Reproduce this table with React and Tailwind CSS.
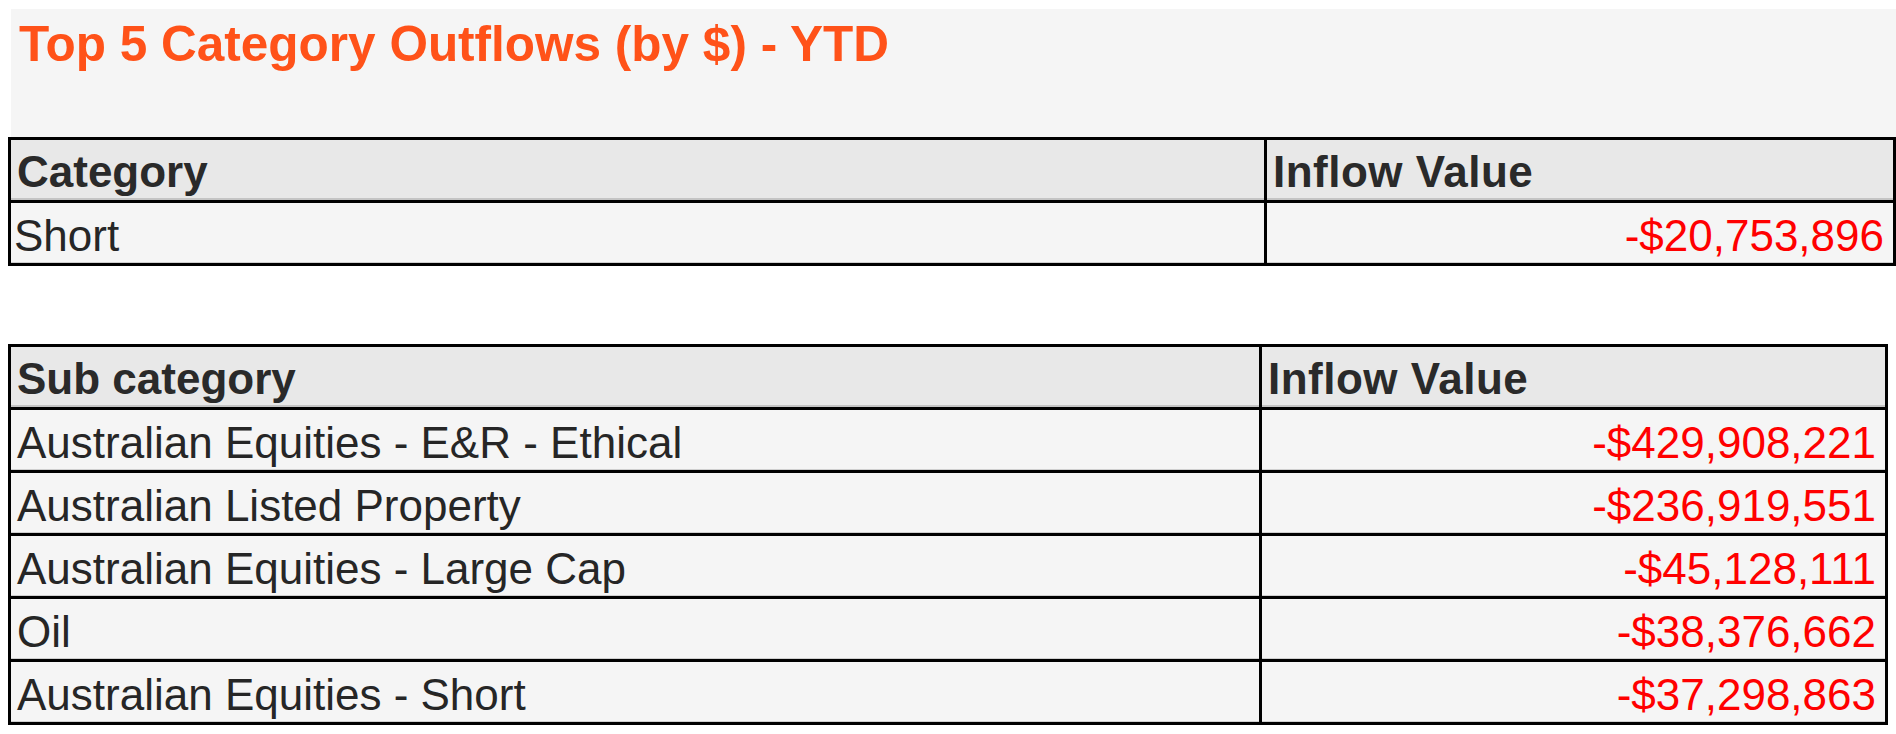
import React from 'react';

const categoryRows = [{ name: 'Short', value: '-$20,753,896' }];

const subCategoryRows = [
    { name: 'Australian Equities - E&R - Ethical', value: '-$429,908,221' },
    { name: 'Australian Listed Property', value: '-$236,919,551' },
    { name: 'Australian Equities - Large Cap', value: '-$45,128,111' },
    { name: 'Oil', value: '-$38,376,662' },
    { name: 'Australian Equities - Short', value: '-$37,298,863' },
];

const FlowTable = ({ label, rows, width, firstCol, namePad }) => {
    return (
        <div className={`${width} border-[3px] border-black`}>
            {/* Header */}
            <div className="flex h-[60px] bg-[#e8e8e8] shadow-[inset_0_-2px_0_#c4c4c4]">
                <div className={`${firstCol} shrink-0 border-r-[3px] border-black flex items-end pl-[6px] pb-[2px]`}>
                    <span className="text-[44px] leading-[1.15] font-bold text-[#2a2a2a]">{label}</span>
                </div>
                <div className="flex-1 flex items-end pl-[6px] pb-[2px]">
                    <span className="text-[44px] leading-[1.15] font-bold text-[#2a2a2a] tracking-[0.5px]">Inflow Value</span>
                </div>
            </div>

            {rows.map((row) => (
                <div key={row.name} className="flex h-[63px] border-t-[3px] border-black bg-[#f5f5f5] shadow-[inset_0_-1px_0_#cfcfcf]">
                    <div className={`${firstCol} shrink-0 border-r-[3px] border-black flex items-end ${namePad} pb-[1px]`}>
                        <span className="text-[44px] leading-[1.15] text-[#262626] whitespace-nowrap">{row.name}</span>
                    </div>
                    <div className="flex-1 flex items-end justify-end pr-[9px] pb-[1px]">
                        <span className="text-[44px] leading-[1.15] text-[#ff0000]">{row.value}</span>
                    </div>
                </div>
            ))}
        </div>
    );
};

const App = () => {
    return (
        <div className="min-h-screen bg-white pl-2 pt-[9px] font-[family-name:Liberation_Sans,Arial,sans-serif]">
            <div className="ml-[3px] h-[128px] bg-[#f5f5f5] pl-[8px] pt-[10px]">
                <h1 className="text-[49.5px] leading-none font-bold text-[#ff5219] whitespace-nowrap">
                    Top 5 Category Outflows (by $) - YTD
                </h1>
            </div>

            <FlowTable label="Category" rows={categoryRows} width="w-[1888px]" firstCol="w-[1256px]" namePad="pl-[3px]" />

            <div className="h-[78px]" />

            <FlowTable label="Sub category" rows={subCategoryRows} width="w-[1880px]" firstCol="w-[1251px]" namePad="pl-[6px]" />
        </div>
    );
};

export default App;
